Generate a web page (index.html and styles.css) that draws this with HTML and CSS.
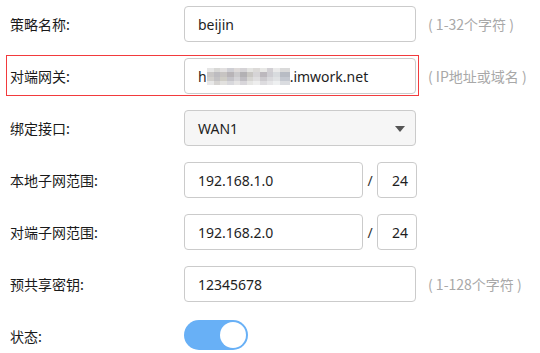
FILE: index.html
```html
<!DOCTYPE html>
<html lang="zh-CN">
<head>
<meta charset="utf-8">
<title>策略</title>
<link rel="stylesheet" href="styles.css">
</head>
<body>
<div class="form">
  <div class="row">
    <div class="field">
      <label class="label">策略名称:</label>
      <div class="input wide">beijin</div>
    </div>
    <span class="hint">( 1-32个字符 )</span>
  </div>
  <div class="row">
    <div class="field hl">
      <label class="label">对端网关:</label>
      <div class="input wide">h<span class="blur"></span>.imwork.net</div>
    </div>
    <span class="hint">( IP地址或域名 )</span>
  </div>
  <div class="row">
    <div class="field">
      <label class="label">绑定接口:</label>
      <div class="input wide select">WAN1<span class="arrow"></span></div>
    </div>
  </div>
  <div class="row">
    <div class="field">
      <label class="label">本地子网范围:</label>
      <div class="input net">192.168.1.0</div>
      <span class="slash">/</span>
      <div class="input mask">24</div>
    </div>
  </div>
  <div class="row">
    <div class="field">
      <label class="label">对端子网范围:</label>
      <div class="input net">192.168.2.0</div>
      <span class="slash">/</span>
      <div class="input mask">24</div>
    </div>
  </div>
  <div class="row">
    <div class="field">
      <label class="label">预共享密钥:</label>
      <div class="input wide">12345678</div>
    </div>
    <span class="hint">( 1-128个字符 )</span>
  </div>
  <div class="row">
    <div class="field">
      <label class="label">状态:</label>
      <div class="toggle"><span class="knob"></span></div>
    </div>
  </div>
</div>
</body>
</html>
```
FILE: styles.css
```css
* { box-sizing: border-box; }
html, body { margin: 0; padding: 0; background: #fff; }
body {
  font-family: "Noto Sans", "Noto Sans CJK SC", sans-serif;
  color: #222;
}
.form {
  padding: 3px 0 0 6px;
  display: flex;
  flex-direction: column;
  gap: 11px;
}
.row {
  display: flex;
  align-items: center;
  height: 41px;
}
.field {
  display: flex;
  align-items: center;
  width: 413px;
  height: 41px;
  padding: 1px 1px 0 3px;
  border: 1px solid transparent;
}
.field.hl { border-color: #f23a3d; }
.label {
  width: 174px;
  font-family: "Noto Sans CJK SC", sans-serif;
  font-size: 14px;
  color: #1a1a1a;
}
.input {
  height: 36px;
  border: 1px solid #cbcbcb;
  border-radius: 4px;
  display: flex;
  align-items: center;
  padding-left: 13px;
  font-size: 14px;
  color: #1e1e1e;
  background: #fff;
}
.wide { width: 232px; }
.net { width: 179px; }
.mask { width: 40px; padding: 0 8px 0 0; justify-content: flex-end; }
.slash {
  width: 14px;
  text-align: center;
  font-size: 14px;
  color: #333;
}
.select {
  background: #f6f6f6;
  position: relative;
}
.arrow {
  position: absolute;
  right: 10px;
  top: 15px;
  width: 0;
  height: 0;
  border-left: 5px solid transparent;
  border-right: 5px solid transparent;
  border-top: 6px solid #555;
}
.blur {
  display: inline-block;
  width: 83px;
  height: 17px;
  margin-top: 1px;
  background:
    linear-gradient(90deg, #e6e6e6 0 8%, #d8d8d6 8% 16%, #e2e0e0 16% 24%, #cfcfd4 24% 32%, #dedad9 32% 40%, #d5d3d6 40% 48%, #e4e4e2 48% 56%, #dcdad8 56% 64%, #e8e8e6 64% 72%, #d2d0d4 72% 80%, #eaeaea 80% 88%, #dadada 88% 100%) 0 0 / 100% 4px no-repeat,
    linear-gradient(90deg, #c9c7c6 0 8%, #bdbcc0 8% 16%, #c7c4c2 16% 24%, #b8b4b7 24% 32%, #cac9cb 32% 40%, #b3b1b4 40% 48%, #c9c7c3 48% 56%, #d6d4d6 56% 64%, #bcb8bd 64% 72%, #cecdd2 72% 80%, #d8dbde 80% 88%, #b8bcc4 88% 100%) 0 4px / 100% 5px no-repeat,
    linear-gradient(90deg, #d2d0cd 0 8%, #c3c2c4 8% 16%, #cfcdc6 16% 24%, #c4c3c8 24% 32%, #d4d3d6 32% 40%, #bfbdc2 40% 48%, #d6d5d2 48% 56%, #dfdedf 56% 64%, #cccace 64% 72%, #d9d9dc 72% 80%, #e0e2e4 80% 88%, #c4c8d0 88% 100%) 0 9px / 100% 4px no-repeat,
    linear-gradient(90deg, #e8e8e8 0 8%, #d6d4d2 8% 16%, #e2e1df 16% 24%, #d8d8dc 24% 32%, #e5e4e4 32% 40%, #d8d6da 40% 48%, #e6e6e4 48% 56%, #eeeeee 56% 64%, #dddcdf 64% 72%, #e6e6e8 72% 80%, #eef0f1 80% 88%, #dadce0 88% 100%) 0 13px / 100% 4px no-repeat;
}
.hint {
  margin-left: 9px;
  font-family: "Noto Sans CJK SC", sans-serif;
  font-size: 14px;
  color: #a8a8a8;
  white-space: pre;
}
.toggle {
  width: 64px;
  height: 30px;
  border-radius: 15px;
  background: #68b0f6;
  display: flex;
  justify-content: flex-end;
  align-items: center;
  padding-right: 2px;
  margin-top: -2px;
}
.knob {
  width: 26px;
  height: 26px;
  border-radius: 50%;
  background: #fff;
}
```
